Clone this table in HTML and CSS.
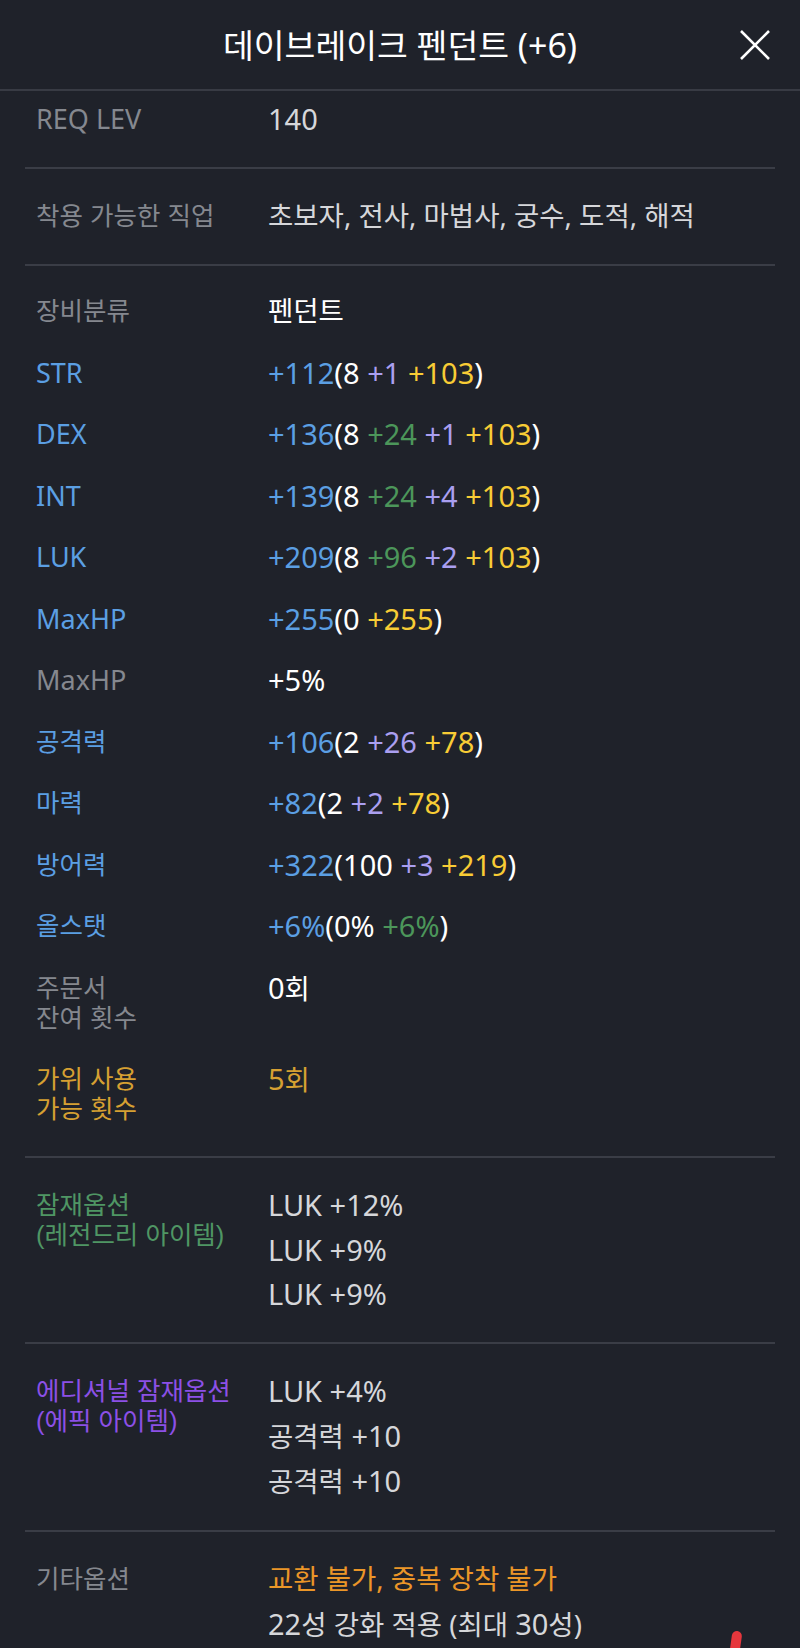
FILE: index.html
```html
<!DOCTYPE html>
<html lang="ko">
<head>
  <meta charset="utf-8">
  <link rel="stylesheet" href="styles.css">
</head>
<body>
  <!-- Header -->
  <header class="top-bar">
    <h1 class="item-title">데이브레이크 펜던트 <span class="title-en">(+6)</span></h1>
    <button class="close-btn" aria-label="닫기">
      <svg width="32" height="32" viewBox="0 0 32 32">
        <path d="M2 2 L30 30 M30 2 L2 30" stroke="#fff" stroke-width="2.6" fill="none"/>
      </svg>
    </button>
  </header>

  <!-- Requirement -->
  <section class="group group-first">
    <div class="row">
      <div class="label en">REQ LEV</div>
      <div class="value dim">140</div>
    </div>
  </section>

  <section class="group">
    <div class="row">
      <div class="label">착용 가능한 직업</div>
      <div class="value ko dim">초보자, 전사, 마법사, 궁수, 도적, 해적</div>
    </div>
  </section>

  <!-- Stats -->
  <section class="group group-stats">
    <div class="row">
      <div class="label">장비분류</div>
      <div class="value ko">펜던트</div>
    </div>
    <div class="row">
      <div class="label en blue">STR</div>
      <div class="value"><span class="b">+112</span>(8 <span class="p">+1</span> <span class="y">+103</span>)</div>
    </div>
    <div class="row">
      <div class="label en blue">DEX</div>
      <div class="value"><span class="b">+136</span>(8 <span class="g">+24</span> <span class="p">+1</span> <span class="y">+103</span>)</div>
    </div>
    <div class="row">
      <div class="label en blue">INT</div>
      <div class="value"><span class="b">+139</span>(8 <span class="g">+24</span> <span class="p">+4</span> <span class="y">+103</span>)</div>
    </div>
    <div class="row">
      <div class="label en blue">LUK</div>
      <div class="value"><span class="b">+209</span>(8 <span class="g">+96</span> <span class="p">+2</span> <span class="y">+103</span>)</div>
    </div>
    <div class="row">
      <div class="label en blue">MaxHP</div>
      <div class="value"><span class="b">+255</span>(0 <span class="y">+255</span>)</div>
    </div>
    <div class="row">
      <div class="label en">MaxHP</div>
      <div class="value">+5%</div>
    </div>
    <div class="row">
      <div class="label blue">공격력</div>
      <div class="value"><span class="b">+106</span>(2 <span class="p">+26</span> <span class="y">+78</span>)</div>
    </div>
    <div class="row">
      <div class="label blue">마력</div>
      <div class="value"><span class="b">+82</span>(2 <span class="p">+2</span> <span class="y">+78</span>)</div>
    </div>
    <div class="row">
      <div class="label blue">방어력</div>
      <div class="value"><span class="b">+322</span>(100 <span class="p">+3</span> <span class="y">+219</span>)</div>
    </div>
    <div class="row">
      <div class="label blue">올스탯</div>
      <div class="value"><span class="b">+6%</span>(0% <span class="g">+6%</span>)</div>
    </div>
    <div class="row">
      <div class="label">주문서<br>잔여 횟수</div>
      <div class="value">0<span class="ko">회</span></div>
    </div>
    <div class="row">
      <div class="label gold">가위 사용<br>가능 횟수</div>
      <div class="value gold">5<span class="ko">회</span></div>
    </div>
  </section>

  <!-- Potential -->
  <section class="group">
    <div class="row">
      <div class="label legend">잠재옵션<br>(레전드리 아이템)</div>
      <div class="value dim lines">
        <div>LUK +12%</div>
        <div>LUK +9%</div>
        <div>LUK +9%</div>
      </div>
    </div>
  </section>

  <section class="group">
    <div class="row">
      <div class="label epic">에디셔널 잠재옵션<br>(에픽 아이템)</div>
      <div class="value dim lines">
        <div>LUK +4%</div>
        <div><span class="ko">공격력</span> +10</div>
        <div><span class="ko">공격력</span> +10</div>
      </div>
    </div>
  </section>

  <section class="group group-last">
    <div class="row">
      <div class="label">기타옵션</div>
      <div class="value dim lines">
        <div class="ko orange">교환 불가, 중복 장착 불가</div>
        <div>22<span class="ko">성 강화 적용 (최대 </span>30<span class="ko">성)</span></div>
      </div>
    </div>
  </section>

  <div class="pen-mark"></div>
</body>
</html>
```

FILE: styles.css
```css
html, body {
  margin: 0;
  height: 100%;
  overflow: hidden;
}

body {
  background: #1f222a;
  font-family: "Noto Sans", "Noto Sans CJK KR", sans-serif;
  color: #fff;
}

/* header */
.top-bar {
  display: grid;
  grid-template-columns: 1fr auto 1fr;
  align-items: center;
  height: 89px;
  border-bottom: 2px solid #383b44;
}

.item-title {
  grid-column: 2;
  margin: 0;
  font-size: 33.5px;
  font-weight: 400;
  line-height: 40px;
  white-space: nowrap;
}

.title-en {
  font-size: 34px;
}

.close-btn {
  justify-self: end;
  margin-right: 29px;
  padding: 0;
  border: 0;
  background: none;
  width: 32px;
  height: 32px;
  display: flex;
  cursor: pointer;
}

/* sections */
.group {
  margin: 0 25px;
  padding: 32px 11px 33px;
  border-bottom: 2px solid #3a3d46;
  display: flex;
  flex-direction: column;
  gap: 31.5px;
}

.group-first {
  padding-top: 13px;
}

.group-stats {
  padding-top: 30px;
  padding-bottom: 32px;
}

.group-last {
  border-bottom: 0;
  padding-bottom: 0;
}

.row {
  display: grid;
  grid-template-columns: 232px 1fr;
  line-height: 30px;
}

/* korean labels: tight two-line labels, so a primary font with a short line box */
.label {
  font-family: "Liberation Sans", "Noto Sans CJK KR", sans-serif;
  font-size: 25.5px;
  color: #85888f;
  white-space: nowrap;
}

.label.en {
  font-family: "Noto Sans", sans-serif;
  font-size: 27px;
}

.value {
  font-size: 29px;
  color: #fff;
  white-space: nowrap;
}

.ko {
  font-size: 27.5px;
}

.value.dim {
  color: #d6d7da;
}

.lines {
  display: flex;
  flex-direction: column;
  gap: 14.5px;
}

/* colours */
.blue, .b { color: #5b9fe3; }
.p { color: #aa9ff0; }
.g { color: #4c965a; }
.y { color: #f8cc35; }
.gold, .value.gold { color: #d6a032; }
.legend { color: #4f9664; }
.epic { color: #8c50e6; }
.orange { color: #eb9628; }

/* red pen stroke over the screenshot corner */
.pen-mark {
  position: absolute;
  left: 731px;
  top: 1631px;
  width: 10px;
  height: 22px;
  background: #e6373d;
  border-radius: 5px 5px 2px 2px;
  transform: rotate(8deg);
}
```
